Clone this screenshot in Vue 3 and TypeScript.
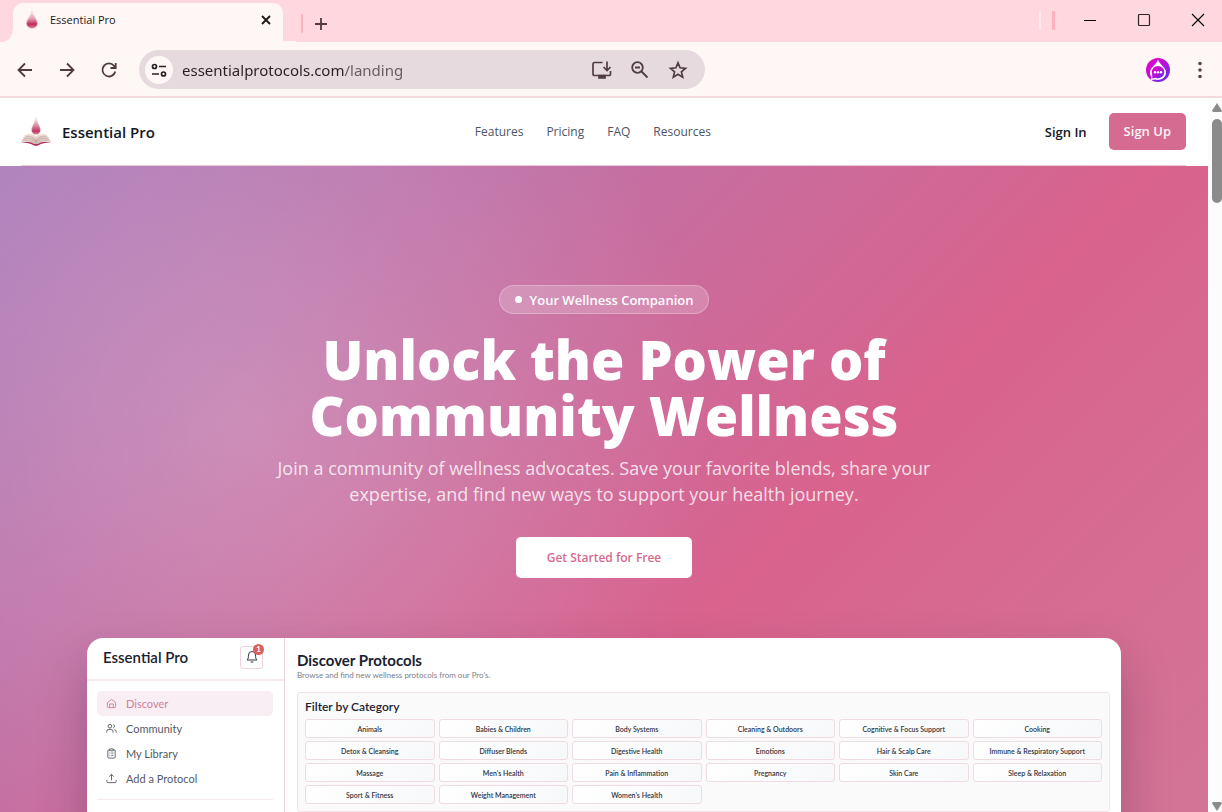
<script setup lang="ts">
import { ref } from 'vue'

const address = ref('essentialprotocols.com/landing')

const siteLinks: string[] = ['Features', 'Pricing', 'FAQ', 'Resources']

interface SideItem {
  label: string
  paths: string[]
}

const sideItems: SideItem[] = [
  {
    label: 'Discover',
    paths: ['M3 10 12 3l9 7v9a2 2 0 0 1-2 2H5a2 2 0 0 1-2-2z', 'M8 21v-8h8v8'],
  },
  {
    label: 'Community',
    paths: [
      'M8.500 11a4 4 0 1 0 0-8 4 4 0 0 0 0 8z',
      'M1.500 21v-2a5 5 0 0 1 5-5h4a5 5 0 0 1 5 5v2',
      'M16 3.300a4 4 0 0 1 0 7.400',
      'M22.500 21v-2a5 5 0 0 0-4-4.800',
    ],
  },
  {
    label: 'My Library',
    paths: [
      'M8 4H6a2 2 0 0 0-2 2v14a2 2 0 0 0 2 2h12a2 2 0 0 0 2-2V6a2 2 0 0 0-2-2h-2',
      'M8 2h8v4H8z',
      'M7.500 11h2M11.500 11H16M7.500 16h2M11.500 16H16',
    ],
  },
  {
    label: 'Add a Protocol',
    paths: ['M2 15v4a2 2 0 0 0 2 2h16a2 2 0 0 0 2-2v-4', 'M7 8l5-5 5 5', 'M12 3v13'],
  },
]

const categories: string[] = [
  'Animals',
  'Babies & Children',
  'Body Systems',
  'Cleaning & Outdoors',
  'Cognitive & Focus Support',
  'Cooking',
  'Detox & Cleansing',
  'Diffuser Blends',
  'Digestive Health',
  'Emotions',
  'Hair & Scalp Care',
  'Immune & Respiratory Support',
  'Massage',
  "Men's Health",
  'Pain & Inflammation',
  'Pregnancy',
  'Skin Care',
  'Sleep & Relaxation',
  'Sport & Fitness',
  'Weight Management',
  "Women's Health",
]
</script>

<template>
  <div class="window">
    <header class="tabstrip">
      <div class="tab">
        <svg class="tab-icon" viewBox="0 0 16 20" aria-hidden="true">
          <defs>
            <linearGradient id="tabDrop" x1="0" y1="0" x2="0" y2="1">
              <stop offset="0" stop-color="#fbeeee" />
              <stop offset="0.45" stop-color="#e39bad" />
              <stop offset="0.75" stop-color="#c22a5f" />
              <stop offset="1" stop-color="#d98a9b" />
            </linearGradient>
          </defs>
          <path d="M8 1C7 6 2.500 9 2.500 13.500a5.500 5 0 0 0 11 0C13.500 9 9 6 8 1z" fill="url(#tabDrop)" stroke="#ecd6c4" stroke-width="0.7" />
        </svg>
        <span class="tab-title">Essential Pro</span>
        <button class="bare" type="button" aria-label="Close tab">
          <svg width="12" height="12" viewBox="0 0 12 12"><path d="M2 2l8 8M10 2l-8 8" stroke="#1d1517" stroke-width="1.8" /></svg>
        </button>
      </div>
      <span class="strip-mark"></span>
      <button class="bare new-tab" type="button" aria-label="New tab">
        <svg width="14" height="14" viewBox="0 0 14 14"><path d="M7 1v12M1 7h12" stroke="#4f3a40" stroke-width="1.8" /></svg>
      </button>
      <div class="window-controls">
        <span class="strip-mark pale"></span>
        <span class="strip-mark wide"></span>
        <button class="bare" type="button" aria-label="Minimize">
          <svg width="14" height="14" viewBox="0 0 14 14"><path d="M1 7.500h12" stroke="#000" /></svg>
        </button>
        <button class="bare" type="button" aria-label="Maximize">
          <svg width="14" height="14" viewBox="0 0 14 14"><rect x="1.500" y="1.500" width="11" height="11" rx="1" fill="none" stroke="#2b2325" stroke-width="1.2" /></svg>
        </button>
        <button class="bare" type="button" aria-label="Close window">
          <svg width="14" height="14" viewBox="0 0 14 14"><path d="M1 1l12 12M13 1L1 13" stroke="#000" stroke-width="1.1" /></svg>
        </button>
      </div>
    </header>

    <div class="toolbar">
      <button class="bare" type="button" aria-label="Back">
        <svg width="18" height="18" viewBox="0 0 18 18" class="tool"><path d="M16 9H3M9 2.500 2.500 9 9 15.500" /></svg>
      </button>
      <button class="bare" type="button" aria-label="Forward">
        <svg width="18" height="18" viewBox="0 0 18 18" class="tool"><path d="M2 9h13M9 2.500 15.500 9 9 15.500" /></svg>
      </button>
      <button class="bare" type="button" aria-label="Reload">
        <svg width="18" height="18" viewBox="0 0 18 18" class="tool"><path d="M15.300 10.500A6.500 6.500 0 1 1 14 4.800L15.500 6.500M15.700 2v5H10.500" /></svg>
      </button>
      <div class="omnibox">
        <button class="bare site-info" type="button" aria-label="View site information">
          <svg width="16" height="16" viewBox="0 0 16 16" fill="none" stroke="#2a1f22" stroke-width="1.7">
            <circle cx="3.500" cy="4.500" r="2" /><path d="M8 4.500h7M1 12h7" /><circle cx="12.500" cy="12" r="2" />
          </svg>
        </button>
        <input v-model="address" class="address" type="text" aria-label="Address" />
        <button class="bare" type="button" aria-label="Install app">
          <svg width="22" height="20" viewBox="0 0 22 20" fill="none" stroke="#4f3d42" stroke-width="1.700">
            <path d="M12.500 2.500H4.500a1.500 1.500 0 0 0-1.500 1.500v10a1.500 1.500 0 0 0 1.500 1.500h14.500a1.500 1.500 0 0 0 1.500-1.500v-3" />
            <path d="M17 1.500v9M13.500 7l3.500 3.500L20.500 7" />
            <path d="M9 15.500h6v2.500h-6z" fill="#4f3d42" />
          </svg>
        </button>
        <button class="bare" type="button" aria-label="Zoom">
          <svg width="20" height="20" viewBox="0 0 20 20" fill="none" stroke="#4f3d42" stroke-width="1.800">
            <circle cx="7.500" cy="7.500" r="5.300" /><path d="M11.500 11.500l6 6M5 7.500h5" />
          </svg>
        </button>
        <button class="bare" type="button" aria-label="Bookmark this page">
          <svg width="20" height="20" viewBox="0 0 20 20" fill="none" stroke="#4f3d42" stroke-width="1.700">
            <path d="M10 2.800l2.100 5 5.400.5-4.100 3.500 1.300 5.300L10 14.200l-4.700 2.900 1.300-5.300-4.100-3.500 5.400-.5z" />
          </svg>
        </button>
      </div>
      <button class="bare profile" type="button" aria-label="Profile">
        <svg width="24" height="24" viewBox="0 0 24 24">
          <defs>
            <linearGradient id="avatarFill" x1="0" y1="0" x2="1" y2="1">
              <stop offset="0" stop-color="#f000c8" />
              <stop offset="0.5" stop-color="#b812d8" />
              <stop offset="1" stop-color="#4a35ee" />
            </linearGradient>
          </defs>
          <circle cx="12" cy="12" r="12" fill="url(#avatarFill)" />
          <path d="M12 1.500C10.500 7 4 9 4 14.500c0 2 .8 3.700 1.500 4.700L5 22l4.500-.4c5.500 1.300 10.500-1.900 10.500-7.100C20 9 13.500 7 12 1.500z" fill="#fff" />
          <circle cx="12" cy="14.200" r="6.200" fill="url(#avatarFill)" />
          <path d="M6.300 16l-.1 4.500 4.300-1z" fill="#b812d8" />
          <g fill="#fff"><circle cx="9" cy="14.200" r="1.200" /><circle cx="12" cy="14.200" r="1.200" /><circle cx="15" cy="14.200" r="1.200" /></g>
        </svg>
      </button>
      <button class="bare" type="button" aria-label="Browser menu">
        <svg width="6" height="18" viewBox="0 0 6 18" fill="#5b4147"><circle cx="3" cy="2.500" r="1.800" /><circle cx="3" cy="9" r="1.800" /><circle cx="3" cy="15.500" r="1.800" /></svg>
      </button>
    </div>

    <div class="viewport">
      <div class="page">
        <div class="site-header">
          <a class="brand" href="#home">
            <svg width="30" height="30" viewBox="0 0 30 30" aria-hidden="true">
              <defs>
                <linearGradient id="brandDrop" x1="0" y1="0" x2="0" y2="1">
                  <stop offset="0" stop-color="#fbf0ee" />
                  <stop offset="0.4" stop-color="#dfa0b3" />
                  <stop offset="0.8" stop-color="#bf3566" />
                  <stop offset="1" stop-color="#d992a6" />
                </linearGradient>
                <linearGradient id="brandPage" x1="0" y1="0" x2="0" y2="1">
                  <stop offset="0" stop-color="#f3e8df" />
                  <stop offset="1" stop-color="#c9aaa0" />
                </linearGradient>
              </defs>
              <path d="M0 25l4-7c4-2 8-1.500 11 1.500 3-3 7-3.500 11-1.500l4 7c-5-1.500-10-1-13 2l-2 1-2-1c-3-3-8-3.500-13-2z" fill="url(#brandPage)" />
              <path d="M3 22c5-2 9-.5 12 3 3-3.500 7-5 12-3M5 19.500c5-1 8 1 10 4.500 2-3.500 5-5.500 10-4.500" fill="none" stroke="#b99" stroke-width="0.6" />
              <path d="M0 25.500c5-1.500 10-1 13 1.500h4c3-2.500 8-3 13-1.500-5-.2-9 .6-12.500 2.700L15 29l-2.500-.8C9 26.100 5 25.300 0 25.500z" fill="#b0305c" />
              <path d="M15 0c-1 6-4.500 9-4.500 13a4.500 4.800 0 0 0 9 0C19.500 9 16 6 15 0z" fill="url(#brandDrop)" stroke="#efdccb" stroke-width="0.500" />
            </svg>
            <span>Essential Pro</span>
          </a>
          <nav class="site-links" aria-label="Main">
            <a v-for="link in siteLinks" :key="link" :href="'#' + link.toLowerCase()">{{ link }}</a>
          </nav>
          <div class="account">
            <a class="sign-in" href="#sign-in">Sign In</a>
            <a class="sign-up" href="#sign-up">Sign Up</a>
          </div>
        </div>

        <main class="hero">
          <div class="pill"><span class="dot"></span>Your Wellness Companion</div>
          <h1>Unlock the Power of<br />Community Wellness</h1>
          <p class="lead">
            Join a community of wellness advocates. Save your favorite blends, share your<br />
            expertise, and find new ways to support your health journey.
          </p>
          <button class="cta" type="button">Get Started for Free</button>

          <section class="preview" aria-label="App preview">
            <aside class="side">
              <div class="side-head">
                <span class="side-title">Essential Pro</span>
                <button class="bell" type="button" aria-label="Notifications">
                  <svg width="12" height="14" viewBox="0 0 12 14" fill="none" stroke="#333a46" stroke-width="1">
                    <path d="M1 10c1.200-1 1.500-2.500 1.500-5a3.500 3.500 0 0 1 7 0c0 2.500.3 4 1.500 5z" stroke-linejoin="round" />
                    <path d="M5 12h2" stroke-linecap="round" />
                  </svg>
                  <span class="count">1</span>
                </button>
              </div>
              <nav class="side-nav" aria-label="App">
                <a v-for="(item, i) in sideItems" :key="item.label" href="#app" :class="{ active: i === 0 }">
                  <svg width="11" height="11" viewBox="0 0 24 24" fill="none" stroke="currentColor" stroke-width="2" stroke-linejoin="round">
                    <path v-for="d in item.paths" :key="d" :d="d" />
                  </svg>
                  {{ item.label }}
                </a>
              </nav>
            </aside>
            <div class="content">
              <h2>Discover Protocols</h2>
              <p class="sub">Browse and find new wellness protocols from our Pro's.</p>
              <div class="filter">
                <h3>Filter by Category</h3>
                <div class="categories">
                  <button v-for="c in categories" :key="c" type="button">{{ c }}</button>
                </div>
              </div>
            </div>
          </section>
        </main>
      </div>
      <div class="scrollbar" aria-hidden="true">
        <span class="arrow up"></span>
        <span class="thumb"></span>
        <span class="arrow down"></span>
      </div>
    </div>
  </div>
</template>

<style>
body {
  overflow: hidden;
}
</style>

<style scoped>
* {
  box-sizing: border-box;
}
.window {
  display: flex;
  flex-direction: column;
  height: 100vh;
  font-family: "Open Sans", "Noto Sans", sans-serif;
  background: #fff;
}
a {
  color: inherit;
  text-decoration: none;
}
svg {
  display: block;
}
button {
  font-family: inherit;
  cursor: pointer;
}
.bare {
  padding: 0;
  border: 0;
  background: none;
}
.tabstrip {
  display: flex;
  align-items: center;
  height: 43px;
  flex: none;
  padding-left: 13px;
  background: linear-gradient(#ffd7de, #ffd7de) top / 100% 42px no-repeat #fff7f5;
}
.tab {
  position: relative;
  display: flex;
  align-items: center;
  width: 270px;
  height: 40px;
  align-self: flex-end;
  padding: 0 11px 7px;
  border-radius: 10px 10px 0 0;
  background: #fff7f5;
}
.tab::before,
.tab::after {
  content: "";
  position: absolute;
  bottom: 0;
  width: 13px;
  height: 13px;
}
.tab::before {
  right: 100%;
  background: radial-gradient(circle at 0 0, transparent 12px, #fff7f5 13px);
}
.tab::after {
  left: 100%;
  height: 2px;
  background: #fff7f5;
}
.tab-icon {
  width: 16px;
  height: 20px;
}
.tab-title {
  flex: 1;
  margin-left: 10px;
  font-size: 11px;
  color: #1f1518;
}
.strip-mark {
  width: 2px;
  height: 19px;
  margin-left: 18px;
  margin-top: 4px;
  border-radius: 1px;
  background: #ffb0bf;
}
.strip-mark.pale {
  margin: 0 11px 0 0;
  background: #ffe9ed;
}
.strip-mark.wide {
  width: 3px;
  margin: 0 28px 0 0;
}
.new-tab {
  margin-left: 11px;
  margin-top: 4px;
}
.window-controls {
  display: flex;
  align-items: center;
  margin-left: auto;
  padding: 0 17px 3px 0;
}
.window-controls .bare + .bare {
  margin-left: 40px;
}
.toolbar {
  display: flex;
  align-items: center;
  flex: none;
  height: 55px;
  padding: 0 19px 0 16px;
  border-bottom: 2px solid #f3d9dd;
  background: #fff7f5;
}
.toolbar > .bare + .bare {
  margin-left: 24px;
}
.tool {
  fill: none;
  stroke: #4f3a40;
  stroke-width: 1.8;
}
.omnibox {
  display: flex;
  align-items: center;
  width: 566px;
  height: 39px;
  margin-left: 21px;
  padding: 0 17px 0 6px;
  border-radius: 20px;
  background: #e6dade;
}
.omnibox .bare + .bare {
  margin-left: 18px;
}
.site-info {
  display: grid;
  place-items: center;
  width: 28px;
  height: 28px;
  border-radius: 50%;
  background: #fff7f5;
}
.address {
  flex: 1;
  min-width: 0;
  margin-left: 9px;
  padding: 0;
  border: 0;
  outline: 0;
  font-family: "Noto Sans", sans-serif;
  font-size: 15px;
  line-height: 24px;
  color: transparent;
  background: linear-gradient(90deg, #2a1f22 163px, #67585d 163px);
  background-clip: text;
}
.profile {
  margin-left: auto;
}
.toolbar > .profile + .bare {
  margin-left: 27px;
}
.viewport {
  display: flex;
  flex: 1;
  min-height: 0;
}
.page {
  flex: 1;
  min-width: 0;
  overflow: hidden;
}
.site-header {
  display: flex;
  align-items: center;
  justify-content: space-between;
  height: 68px;
  margin: 0 22px 0 21px;
  border-bottom: 1px solid #ecc9d6;
  color: #111827;
}
.brand {
  display: flex;
  align-items: center;
  gap: 11px;
  font-size: 15px;
  font-weight: 600;
}
.site-links {
  display: flex;
  gap: 23px;
  padding-right: 14px;
  font-size: 12px;
  color: #4b5563;
}
.account {
  display: flex;
  align-items: center;
  gap: 22px;
  font-size: 13px;
  font-weight: 600;
}
.sign-up {
  padding: 0 15px;
  border-radius: 5px;
  line-height: 37px;
  color: #fff3f7;
  background: #d66b91;
}
.hero {
  display: flex;
  flex-direction: column;
  align-items: center;
  padding-top: 119px;
  text-align: center;
  color: #fff;
  background:
    radial-gradient(circle at 20% 260px, rgba(255, 255, 255, 0.2), rgba(255, 255, 255, 0) 470px),
    linear-gradient(135deg, #ac7dbb 0%, #d9638d 51%, #cf7f9c 100%);
}
.pill {
  display: flex;
  align-items: center;
  gap: 8px;
  height: 29px;
  padding: 0 15px;
  border: 1px solid rgba(255, 255, 255, 0.25);
  border-radius: 15px;
  font-size: 13px;
  font-weight: 600;
  background: rgba(255, 255, 255, 0.2);
}
.dot {
  width: 7px;
  height: 7px;
  border-radius: 50%;
  background: #fff;
}
h1 {
  margin: 17px 0 0;
  font-size: 54px;
  font-weight: 800;
  line-height: 56px;
}
.lead {
  margin: 12px 0 0;
  font-size: 18px;
  line-height: 26px;
  color: rgba(255, 255, 255, 0.8);
}
.cta {
  height: 41px;
  margin-top: 30px;
  padding: 0 31px;
  border: 0;
  border-radius: 5px;
  font-size: 12px;
  font-weight: 600;
  color: #d66b91;
  background: #fff;
}
.preview {
  display: grid;
  grid-template-columns: 198px 1fr;
  width: calc(100% - 174px);
  min-height: 588px;
  margin-top: 60px;
  border-radius: 16px;
  font-family: Lato, sans-serif;
  text-align: left;
  color: #1a2130;
  background: #fff;
  box-shadow: 0 25px 50px rgba(40, 20, 50, 0.27);
}
.side {
  border-right: 1px solid #f0d5de;
}
.side-head {
  display: flex;
  align-items: center;
  justify-content: space-between;
  height: 43px;
  padding: 0 21px 3px 16px;
  border-bottom: 2px solid #f8e9ee;
}
.side-title {
  font-size: 15px;
  font-weight: 600;
}
.bell {
  position: relative;
  display: grid;
  place-items: center;
  width: 23px;
  height: 23px;
  padding: 0;
  border: 1px solid #efd3dc;
  border-radius: 3px;
  background: #fff;
}
.count {
  position: absolute;
  top: -3px;
  right: -2px;
  width: 11px;
  height: 11px;
  border-radius: 50%;
  font-size: 8px;
  font-weight: 700;
  line-height: 11px;
  text-align: center;
  color: #fff;
  background: #d9605c;
}
.side-nav {
  display: flex;
  flex-direction: column;
  margin: 10px 11px 0 10px;
  padding-bottom: 8px;
  border-bottom: 1px solid #f5e8ec;
}
.side-nav a {
  display: flex;
  align-items: center;
  gap: 9px;
  height: 25px;
  padding-left: 9px;
  border-radius: 5px;
  font-size: 11px;
  color: #545a66;
}
.side-nav .active {
  color: #cc7f9d;
  background: #f9eef3;
}
.content {
  padding: 14px 11px 0 12px;
}
h2 {
  margin: 0;
  font-size: 15px;
  font-weight: 700;
  line-height: 16px;
}
.sub {
  margin: 2px 0 0;
  font-size: 8px;
  line-height: 10px;
  color: #7c828d;
}
.filter {
  margin-top: 12px;
  padding: 6px 7px 7px;
  border: 1px solid #f2e2e8;
  border-radius: 3px;
  background: #fafafa;
}
h3 {
  margin: 0;
  font-size: 12px;
  font-weight: 600;
  line-height: 16px;
}
.categories {
  display: grid;
  grid-template-columns: repeat(6, minmax(0, 1fr));
  gap: 3px 4px;
  margin-top: 4px;
}
.categories button {
  height: 19px;
  padding: 0;
  border: 1px solid #f0dbe2;
  border-radius: 3px;
  font-size: 7px;
  font-weight: 600;
  color: #2f3542;
  background: linear-gradient(135deg, #fff, #f6f8fa);
}
.scrollbar {
  display: flex;
  flex-direction: column;
  align-items: center;
  width: 14px;
  padding: 5px 0 1px 4px;
  background: #fcfcfc;
}
.arrow {
  width: 10px;
  height: 9px;
  background: #8b8b8b;
  clip-path: polygon(50% 0, 100% 85%, 90% 100%, 10% 100%, 0 85%);
}
.arrow.down {
  margin-top: auto;
  clip-path: polygon(50% 100%, 100% 15%, 90% 0, 10% 0, 0 15%);
}
.thumb {
  width: 10px;
  height: 84px;
  margin-top: 7px;
  border-radius: 5px;
  background: #8b8b8b;
}
</style>
